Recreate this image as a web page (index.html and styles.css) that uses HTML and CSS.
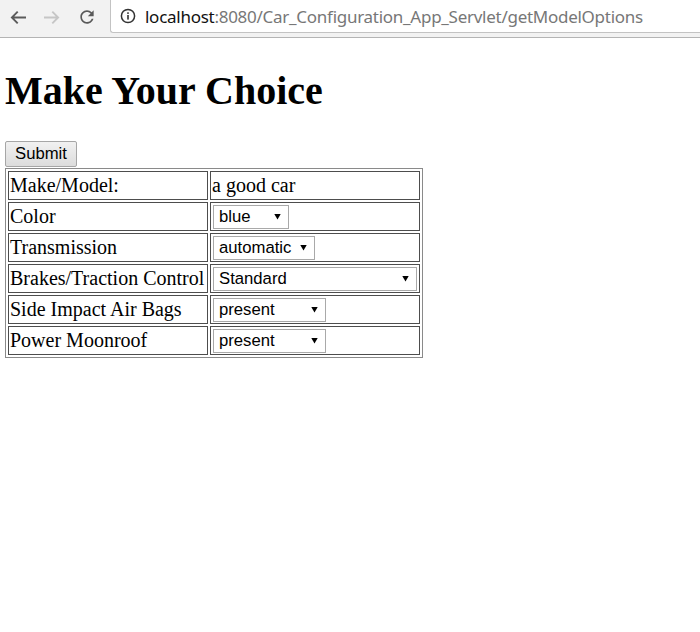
FILE: index.html
```html
<!DOCTYPE html>
<html>
<head>
<meta charset="utf-8">
<title>getModelOptions</title>
<link rel="stylesheet" href="styles.css">
</head>
<body>
<header class="chrome">
  <nav class="nav">
    <svg class="ic back" width="16" height="13" viewBox="0 0 16 13"><path d="M1.5 6.5H16M7.7 0.7L1.9 6.5l5.8 5.8" fill="none" stroke="#5a5a5a" stroke-width="1.9"/></svg>
    <svg class="ic fwd" width="16" height="13" viewBox="0 0 16 13"><path d="M14.5 6.5H0M8.3 0.7l5.8 5.8-5.8 5.8" fill="none" stroke="#c6c6c6" stroke-width="1.9"/></svg>
    <svg class="ic reload" width="20" height="20" viewBox="0 0 24 24"><path fill="#5a5a5a" d="M17.65 6.35C16.2 4.9 14.21 4 12 4c-4.42 0-7.990 3.58-7.99 8s3.570 8 7.99 8c3.73 0 6.84-2.55 7.73-6h-2.08c-.82 2.330-3.04 4-5.65 4-3.31 0-6-2.69-6-6s2.69-6 6-6c1.66 0 3.14.69 4.22 1.78L13 11h7V4l-2.35 2.35z"/></svg>
  </nav>
  <div class="omnibox">
    <svg class="info" width="16" height="16" viewBox="0 0 16 16"><circle cx="8" cy="8" r="6.6" fill="none" stroke="#333" stroke-width="1.5"/><rect x="7.2" y="7" width="1.6" height="4.6" fill="#333"/><rect x="7.2" y="4.3" width="1.6" height="1.6" fill="#333"/></svg>
    <span class="url"><span class="host">localhost</span><span class="path">:8080/Car_Configuration_App_Servlet/getModelOptions</span></span>
  </div>
</header>
<main class="page">
  <h1 class="title">Make Your Choice</h1>
  <form class="form">
    <button type="submit" class="btn">Submit</button>
    <table class="opts">
      <tr><td class="lbl">Make/Model:</td><td class="val">a good car</td></tr>
      <tr><td class="lbl">Color</td><td class="val"><span class="sel w-color"><select><option>blue</option></select></span></td></tr>
      <tr><td class="lbl">Transmission</td><td class="val"><span class="sel w-trans"><select><option>automatic</option></select></span></td></tr>
      <tr><td class="lbl">Brakes/Traction Control</td><td class="val"><span class="sel w-brakes"><select><option>Standard</option></select></span></td></tr>
      <tr><td class="lbl">Side Impact Air Bags</td><td class="val"><span class="sel w-bags"><select><option>present</option></select></span></td></tr>
      <tr><td class="lbl">Power Moonroof</td><td class="val"><span class="sel w-bags"><select><option>present</option></select></span></td></tr>
    </table>
  </form>
</main>
</body>
</html>
```

FILE: styles.css
```css
html, body {
  margin: 0;
  padding: 0;
  background: #fff;
}

.chrome {
  display: flex;
  align-items: flex-start;
  height: 37px;
  background: #f2f2f2;
  border-bottom: 1px solid #b4b4b4;
}

.nav {
  display: flex;
  align-items: center;
  width: 110px;
  height: 34px;
}

.ic { display: block; flex: none; }
.back { margin-left: 10px; }
.fwd { margin-left: 18px; }
.reload { margin-left: 17px; }

.omnibox {
  flex: 1;
  display: flex;
  align-items: center;
  height: 34px;
  margin-top: -1px;
  box-sizing: border-box;
  background: #fff;
  border: 1px solid #c3c3c3;
  border-right: none;
  border-radius: 0 0 0 3px;
}

.info { margin-left: 9px; flex: none; }

.url {
  margin-left: 9px;
  font-family: "Noto Sans", "Open Sans", sans-serif;
  font-size: 17px;
  letter-spacing: -0.27px;
  white-space: nowrap;
  padding-top: 1px;
}
.host { color: #111; }
.path { color: #777; }

.page {
  padding-left: 5px;
  font-family: "Liberation Serif", "Times New Roman", serif;
  font-size: 20px;
}

.title {
  margin: 30px 0 27px;
  font-size: 40px;
  line-height: 46px;
  font-weight: bold;
}

.form {
  display: flex;
  flex-direction: column;
  align-items: flex-start;
  margin: 0;
}

.btn {
  width: 72px;
  height: 26px;
  margin: 0;
  padding: 0;
  box-sizing: border-box;
  font-family: "Liberation Sans", Arial, sans-serif;
  font-size: 16.7px;
  color: #000;
  background: linear-gradient(#f1f1f1, #dcdcdc);
  border: 1px solid #a6a6a6;
  border-radius: 2px;
}

.opts {
  margin-top: 1px;
  border: 1px solid #8a8a8a;
  border-spacing: 2px;
  font-size: 20px;
}

.opts td {
  border: 1px solid #4d4d4d;
  padding: 1px;
  height: 24.5px;
  vertical-align: middle;
  line-height: 23px;
  white-space: nowrap;
}

.lbl { width: 196px; padding-left: 1px; }
.val { width: 206px; }

.sel {
  position: relative;
  display: inline-block;
  vertical-align: top;
  margin: 1px 0 0 1px;
}

.sel::after {
  content: "";
  position: absolute;
  right: 8px;
  top: 9px;
  width: 7px;
  height: 6px;
  background: #000;
  clip-path: polygon(0 0, 100% 0, 50% 100%);
  pointer-events: none;
}

.sel select {
  -webkit-appearance: none;
  appearance: none;
  display: block;
  width: 100%;
  height: 24px;
  margin: 0;
  padding: 0 0 0 5px;
  box-sizing: border-box;
  font-family: "Liberation Sans", Arial, sans-serif;
  font-size: 16.7px;
  color: #000;
  background: #fff;
  border: 1px solid #a9a9a9;
  border-radius: 0;
}

.w-color { width: 76px; }
.w-trans { width: 102px; }
.w-brakes { width: 204px; }
.w-bags { width: 113px; }
```
